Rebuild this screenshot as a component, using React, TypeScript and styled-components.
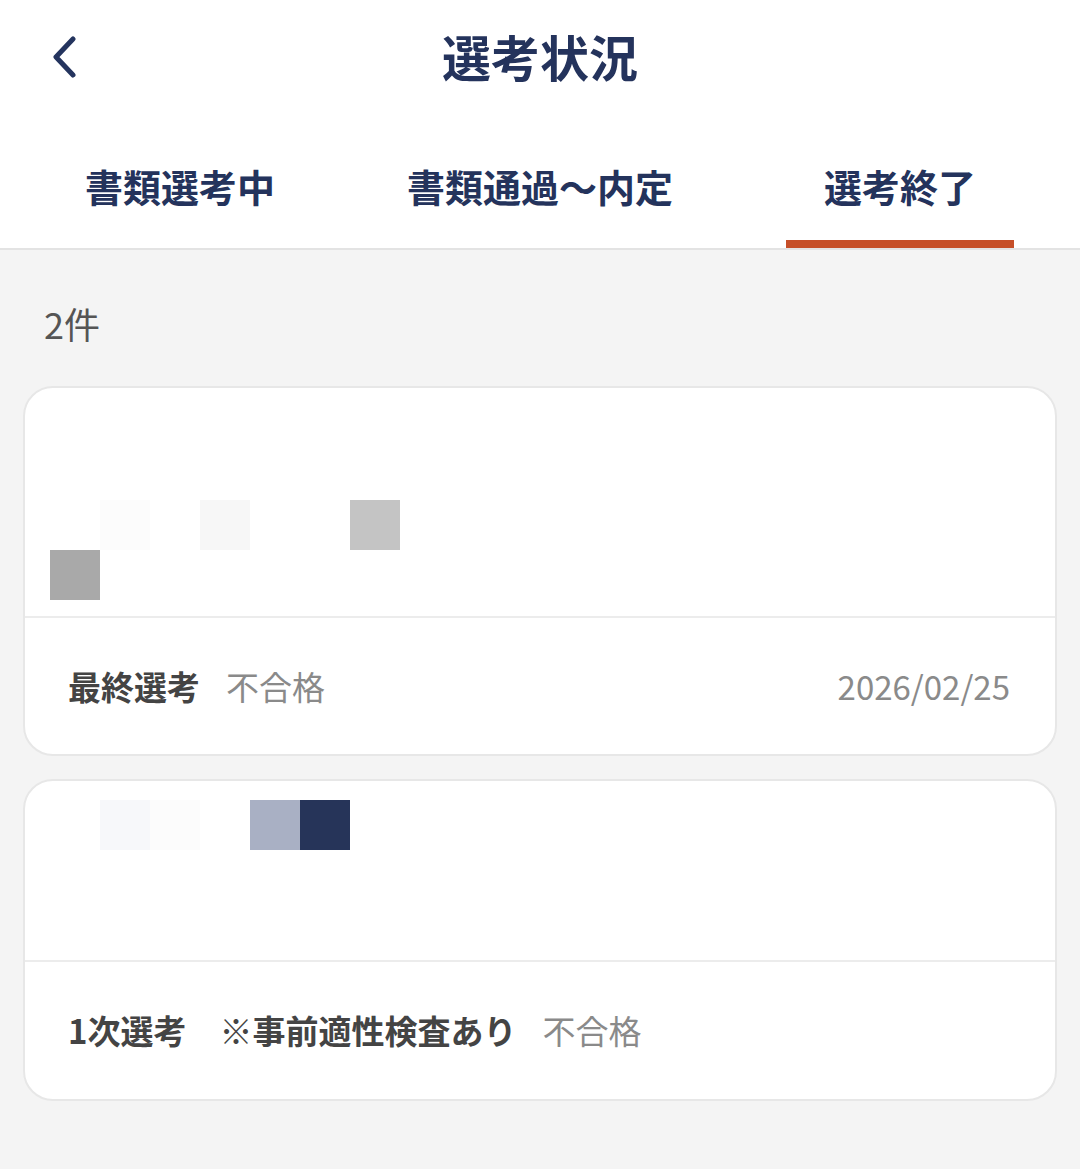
import React from "react";
import styled, { createGlobalStyle } from "styled-components";

const Global = createGlobalStyle`
  html, body { margin: 0; padding: 0; }
  body {
    background: #f4f4f4;
    font-family: "Noto Sans CJK JP", "Noto Sans", sans-serif;
    -webkit-font-smoothing: antialiased;
  }
`;

const Page = styled.div`
  width: 1080px;
  min-height: 1169px;
  background: #f4f4f4;
`;

const Header = styled.header`
  background: #ffffff;
  border-bottom: 2px solid #e3e3e3;
`;

const TopBar = styled.div`
  height: 118px;
  box-sizing: border-box;
  padding-bottom: 8px;
  display: grid;
  grid-template-columns: 1fr auto 1fr;
  align-items: center;
`;

const BackButton = styled.button`
  justify-self: start;
  margin-left: 44px;
  margin-top: 4px;
  width: 40px;
  height: 48px;
  padding: 0;
  border: none;
  background: none;
  display: flex;
  align-items: center;
  justify-content: center;
  color: #24345e;
`;

const Title = styled.h1`
  margin: 0;
  font-size: 49px;
  font-weight: 700;
  color: #24335c;
  line-height: 1;
`;

const Tabs = styled.nav`
  height: 130px;
  display: flex;
`;

const Tab = styled.div`
  flex: 1;
  display: flex;
  flex-direction: column;
  align-items: center;
  justify-content: flex-end;
`;

const TabLabel = styled.span<{ $active?: boolean }>`
  font-size: 38px;
  font-weight: 700;
  color: #24335c;
  line-height: 1;
  padding: 0 38px 35px;
  border-bottom: 8px solid ${(p) => (p.$active ? "#c64f28" : "transparent")};
`;

const Content = styled.main`
  padding: 0 23px;
`;

const Count = styled.div`
  font-size: 36px;
  color: #555;
  line-height: 1;
  padding: 55px 0 0 21px;
  height: 80px;
  box-sizing: border-box;
`;

const CardList = styled.div`
  margin-top: 56px;
  display: flex;
  flex-direction: column;
  gap: 23px;
`;

const Card = styled.section`
  background: #fff;
  border: 2px solid #e7e7e7;
  border-radius: 30px;
  overflow: hidden;
`;

const CardBody = styled.div<{ $h: number; $pt: number }>`
  height: ${(p) => p.$h}px;
  padding-top: ${(p) => p.$pt}px;
  padding-left: 25px;
  box-sizing: border-box;
  border-bottom: 2px solid #ececec;
`;

const Mosaic = styled.div`
  display: grid;
  grid-template-columns: repeat(7, 50px);
  grid-auto-rows: 50px;
`;

const Cell = styled.div<{ $c: string }>`
  background: ${(p) => p.$c};
`;

const CardFooter = styled.div<{ $h: number }>`
  height: ${(p) => p.$h}px;
  display: flex;
  align-items: center;
  padding: 0 45px 0 43px;
  font-size: 33px;
  line-height: 1;
`;

const Stage = styled.span`
  font-weight: 700;
  color: #444;
  white-space: pre;
`;

const Result = styled.span`
  color: #8a8a8a;
  margin-left: 26px;
`;

const DateText = styled.span`
  margin-left: auto;
  color: #8a8a8a;
  font-size: 33px;
`;

const W = "#ffffff";

const cards = [
  {
    bodyH: 230,
    pt: 112,
    cells: [W, "#fcfcfc", W, "#f7f7f7", W, W, "#c4c4c4", "#a9a9a9"],
    footerH: 136,
    stage: "最終選考",
    result: "不合格",
    date: "2026/02/25",
  },
  {
    bodyH: 181,
    pt: 19,
    cells: [W, "#f7f8fa", "#fcfcfc", W, "#a9b0c4", "#263459"],
    footerH: 137,
    stage: "1次選考　※事前適性検査あり",
    result: "不合格",
    date: "",
  },
];

export default function App() {
  return (
    <Page>
      <Global />
      <Header>
        <TopBar>
          <BackButton aria-label="戻る">
            <svg width="28" height="42" viewBox="0 0 28 42" fill="none">
              <path
                d="M23 3 L6 21 L23 39"
                stroke="currentColor"
                strokeWidth="5"
                strokeLinecap="round"
                strokeLinejoin="round"
              />
            </svg>
          </BackButton>
          <Title>選考状況</Title>
          <span />
        </TopBar>
        <Tabs>
          <Tab>
            <TabLabel>書類選考中</TabLabel>
          </Tab>
          <Tab>
            <TabLabel>書類通過〜内定</TabLabel>
          </Tab>
          <Tab>
            <TabLabel $active>選考終了</TabLabel>
          </Tab>
        </Tabs>
      </Header>
      <Content>
        <Count>2件</Count>
        <CardList>
          {cards.map((c, i) => (
            <Card key={i}>
              <CardBody $h={c.bodyH} $pt={c.pt}>
                <Mosaic>
                  {c.cells.map((col, j) => (
                    <Cell key={j} $c={col} />
                  ))}
                </Mosaic>
              </CardBody>
              <CardFooter $h={c.footerH}>
                <Stage>{c.stage}</Stage>
                <Result>{c.result}</Result>
                {c.date && <DateText>{c.date}</DateText>}
              </CardFooter>
            </Card>
          ))}
        </CardList>
      </Content>
    </Page>
  );
}
